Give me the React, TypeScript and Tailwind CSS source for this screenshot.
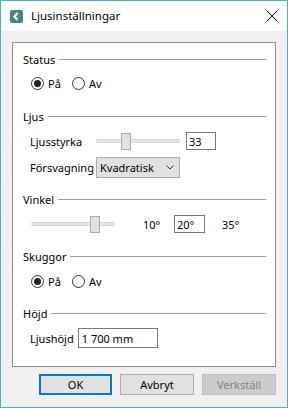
import React from 'react';

const font = { fontFamily: '"Noto Sans", "Liberation Sans", sans-serif' };

const GroupHeading: React.FC<{ title: string; className?: string }> = ({ title, className }) => (
  <div className={`flex h-[14px] items-center gap-[4px] ${className ?? ''}`}>
    <span className="leading-none">{title}</span>
    <div className="h-px flex-1 bg-[#a0a0a0]" />
  </div>
);

const Radio: React.FC<{ label: string; checked?: boolean; className?: string }> = ({ label, checked, className }) => (
  <label className={`flex items-center gap-[4px] ${className ?? ''}`}>
    <span className="flex h-[13px] w-[13px] items-center justify-center rounded-full border border-[#333333] bg-white">
      {checked && <span className="h-[7px] w-[7px] rounded-full bg-[#222222]" />}
    </span>
    <span className="leading-none">{label}</span>
  </label>
);

const Slider: React.FC<{ width: number; thumbAt: number }> = ({ width, thumbAt }) => (
  <div className="relative flex h-[17px] items-center" style={{ width }}>
    <div className="h-[4px] w-full rounded-[2px] border border-[#d6d6d6] bg-[#e7eaea]" />
    <div
      className="absolute top-0 h-[17px] w-[10px] border border-[#adadad] bg-[#e1e1e1]"
      style={{ left: thumbAt }}
    />
  </div>
);

const App: React.FC = () => {
  return (
    <div
      className="flex h-[408px] w-[288px] flex-col border border-[#45b5ca] bg-[#f0f0f0] text-[11px] text-black"
      style={font}
    >
      {/* title bar */}
      <div className="flex h-[30px] items-center bg-white pl-[9px] pr-[8px]">
        <svg width="13" height="13" viewBox="0 0 13 13">
          <rect x="0" y="0" width="13" height="13" rx="2" fill="#3f8a84" />
          <path d="M7.5 3 L4.5 6.5 L7.5 10" stroke="#ffffff" strokeWidth="2.2" fill="none" />
        </svg>
        <span className="ml-[8px] flex-1 text-[11.5px]">Ljusinställningar</span>
        <svg width="12" height="12" viewBox="0 0 12 12" className="mr-[1px]">
          <path d="M0.5 0.5 L11.5 11.5 M11.5 0.5 L0.5 11.5" stroke="#111111" strokeWidth="1" />
        </svg>
      </div>

      {/* group panel */}
      <div className="mx-[11px] mt-[11px] h-[325px] border border-[#8a8f96] bg-white pl-[10px] pr-[9px]">
        <GroupHeading title="Status" className="mt-[9px]" />
        <div className="mt-[9px] flex h-[16px] items-center pl-[8px]">
          <Radio label="På" checked className="w-[41px]" />
          <Radio label="Av" />
        </div>

        <GroupHeading title="Ljus" className="mt-[18px]" />
        <div className="mt-[9px] flex h-[18px] items-center pl-[7px]">
          <span className="w-[66px] leading-none">Ljusstyrka</span>
          <Slider width={84} thumbAt={25} />
          <div className="ml-[6px] flex h-[18px] w-[30px] items-center border border-[#7a7a7a] bg-white pl-[2px] leading-none">
            33
          </div>
        </div>
        <div className="mt-[7px] flex h-[21px] items-center pl-[7px]">
          <span className="w-[66px] leading-none">Försvagning</span>
          <div className="flex h-[21px] w-[84px] items-center justify-between border border-[#adadad] bg-[#e1e1e1] pl-[3px] pr-[5px] leading-none">
            <span>Kvadratisk</span>
            <svg width="8" height="5" viewBox="0 0 8 5">
              <path d="M0.5 0.5 L4 4 L7.5 0.5" stroke="#333333" strokeWidth="1" fill="none" />
            </svg>
          </div>
        </div>

        <GroupHeading title="Vinkel" className="mt-[14px]" />
        <div className="mt-[9px] flex h-[18px] items-center pl-[8px]">
          <Slider width={84} thumbAt={59} />
          <span className="ml-[28px] w-[31px] leading-none">10°</span>
          <div className="flex h-[18px] w-[31px] items-center border border-[#7a7a7a] bg-white pl-[2px] leading-none">
            20°
          </div>
          <span className="ml-[17px] leading-none">35°</span>
        </div>

        <GroupHeading title="Skuggor" className="mt-[16px]" />
        <div className="mt-[10px] flex h-[16px] items-center pl-[8px]">
          <Radio label="På" checked className="w-[41px]" />
          <Radio label="Av" />
        </div>

        <GroupHeading title="Höjd" className="mt-[17px]" />
        <div className="mt-[8px] flex h-[20px] items-center pl-[7px]">
          <span className="leading-none">Ljushöjd</span>
          <div className="ml-[4px] flex h-[20px] w-[80px] items-center border border-[#7a7a7a] bg-white pl-[3px] leading-none">
            1 700 mm
          </div>
        </div>
      </div>

      {/* buttons */}
      <div className="mr-[11px] mt-[7px] flex justify-end gap-[8px]">
        <button className="h-[21px] w-[73px] border-2 border-[#0078d7] bg-[#e1e1e1] leading-none">OK</button>
        <button className="h-[21px] w-[74px] border border-[#adadad] bg-[#e1e1e1] leading-none">Avbryt</button>
        <button className="h-[21px] w-[74px] border border-[#bfbfbf] bg-[#cccccc] leading-none text-[#838383]">
          Verkställ
        </button>
      </div>
    </div>
  );
};

export default App;
